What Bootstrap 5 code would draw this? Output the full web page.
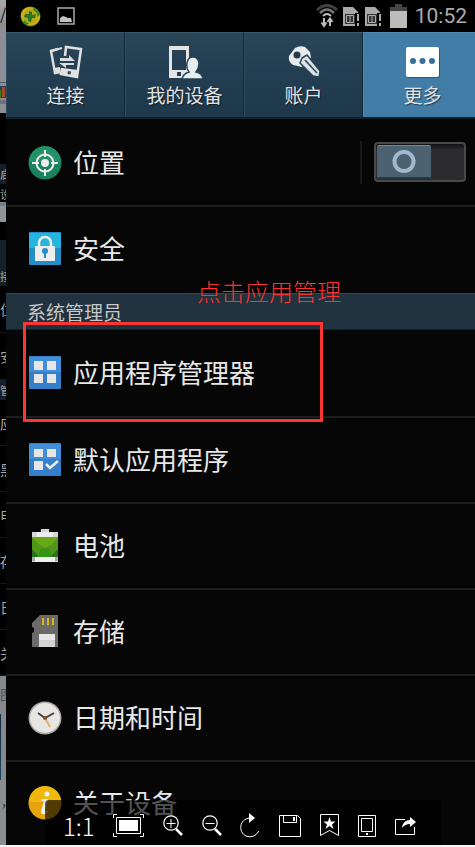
<!DOCTYPE html>
<html lang="zh-CN">
<head>
<meta charset="utf-8">
<meta name="viewport" content="width=device-width, initial-scale=1">
<title>设置</title>
<link href="https://cdn.jsdelivr.net/npm/bootstrap@5.3.0/dist/css/bootstrap.min.css" rel="stylesheet">
<style>
body{background:#f5f5f5;font-family:"Noto Sans CJK SC",sans-serif;color:#e4e4e4}
svg{display:block;flex-shrink:0}
.viewer{background:#080808}
/* sliver of the page behind the viewer */
.backdrop{width:6px;flex:none;background:#000;overflow:hidden;color:#a5a5a5;font-size:14px;line-height:20px;white-space:nowrap}
.backdrop div{height:46px;padding-top:13px;overflow:hidden;border-bottom:1px solid #181818}
.backdrop .b-wide{height:47px}
.backdrop .b-top{height:28px;padding-top:3px;background:linear-gradient(#aaa,#8a8b8e);color:#111;border:0;font-size:16px}
.backdrop .b-gray{height:55px;background:#8c8f95;border-bottom:1px solid #55585c}
.backdrop .b-chart{height:30px;padding-top:3px;background:#8c8f95;border:0}
.backdrop .b-black{height:51px;border:0}
.backdrop .b-navy{height:20px;padding:0;background:#14212c;border:0;font-size:11px}
.backdrop .b-small{height:18px;padding:0;font-size:11px;border:0}
.backdrop .b-light{height:20px;background:#90939a;border:0;border-top:4px solid #71828d}
.backdrop .b-tab{background:#14212c;padding-top:26px;font-size:11px;border:0}
.backdrop .b-foot{height:38px;padding-top:8px;background:#85888d;color:#4b4d50;border:0}
.backdrop .b-pic{height:66px;background:linear-gradient(#152b3e,#144565);border-right:5px solid #85888d;border-bottom:0}
.backdrop .b-end{height:65px;background:#898c91;color:#333;padding:12px 0 0 2px;line-height:16px;border:0}
.phone{min-width:0}
.statusbar{height:32px;background:#000;padding:0 8px 0 14px}
.clock{font:21px/32px Roboto,sans-serif;color:#aaa}
.tabrow{overflow:hidden;background:#1f394d;border-bottom:2px solid #152029}
.tabset{width:calc(100% + 7px)}
.tabset a{height:85px;padding-top:12px;background:linear-gradient(#294558,#1d374b);border-left:1px solid #304b5e;border-right:1px solid #112838;border-top:1px solid #3c5768;color:#e2e2e2;font-size:19px;line-height:28px;text-shadow:1px 1px 1px #0008}
.tabset a.active{background:#427da8;border-color:#5288ae}
.tabset svg{margin-bottom:2px}
.entry{height:86px;padding:0 9px 2px 20px;background:#060606;border-bottom:2px solid #1e1e1e;color:#e8e8e8;font-size:26px;line-height:36px}
.entry svg{margin-top:2px}
.entry:hover{color:#fff}
.entry.tall{height:88px}
.entry.switchable{padding-bottom:0}
.entry.last{border-bottom-color:#060606}
.entry.cut{height:83px}
.section-name{height:37px;background:#20323d;border-top:1px solid #324955;border-bottom:1px solid #142029;padding-left:21px;font-size:19px;line-height:36px;color:#c8c8c8}
.switch-cell{height:43px;border-left:2px solid #181818;padding-left:12px}
.toggle{appearance:none;width:92px;height:40px;border:2px solid #494949;border-radius:4px;background:linear-gradient(#121212,#2c2c2e 6px);padding:1px;margin:0;display:block}
.toggle::before{content:"";display:block;width:54px;height:34px;border-radius:2px;border-top:1px solid #718898;border-bottom:2px solid #263943;background:radial-gradient(circle at center,transparent 7px,#a0b9cf 8px,#a0b9cf 11px,transparent 12px),#4c6271}
.toggle:checked::before{margin-left:32px}
.marker{position:absolute;left:17px;top:-8px;width:300px;height:100px;border:3px solid #f93634;z-index:2;pointer-events:none}
.hint{position:absolute;left:191px;top:-20px;font-size:24px;line-height:36px;font-weight:300;color:#f93330;z-index:2}
.toolset{position:absolute;left:45px;right:34px;bottom:0;height:45px;padding:6px 24px 0 18px;background:#000000a6;border-radius:4px 4px 0 0;z-index:3}
.toolset button{background:none;border:0;padding:0;color:#fff;height:36px;display:flex;align-items:center;justify-content:center}
.toolset .actual-size{font:300 24px/36px "Noto Sans CJK SC",sans-serif}
.footer-gap{height:2px}
</style>
<script src="https://cdn.jsdelivr.net/npm/bootstrap@5.3.0/dist/js/bootstrap.bundle.min.js"></script>
</head>
<body>
<main class="viewer d-flex position-relative">
<div class="backdrop" aria-hidden="true">
<div class="b-top">/:</div><div class="b-gray"></div>
<div class="b-chart"><svg width="6" height="24"><path d="M0 0h6v12H0z" fill="#29435e"/><path d="M0 4h1v7H0z" fill="#3e7c25"/><path d="M2 1h3v10H2z" fill="#a64a27"/><path d="M0 15h6M0 17h6" stroke="#555"/></svg></div>
<div class="b-black"></div><div class="b-navy">启动</div><div class="b-small">设</div><div class="b-light"></div><div class="b-small"></div><div class="b-tab">接</div>
<div class="b-wide">位</div><div class="b-wide">安</div><div class="b-navy">管理</div><div>应用</div><div>黑</div><div>电</div><div>存</div><div>日</div><div>关</div><div class="b-foot">图</div><div class="b-pic"></div><div class="b-end">,</div>
</div>
<div class="phone flex-grow-1 d-flex flex-column">
<header class="statusbar d-flex align-items-center">
<svg width="21" height="21" viewBox="0 0 21 21"><circle cx="10.500" cy="10.500" r="10" fill="#378a24"/><path d="M1 11C0 3 8-1 14 2L10 8 3 16zM20 9c1 7-5 12-13 10L14 13z" fill="#cfae15"/><circle cx="10.500" cy="10.500" r="7" fill="#b9a519"/><path d="M9 5l3 1v3l4-1-1 4h-3l-1 4-3-1v-3l-4-1 1-3h4z" fill="#267724"/></svg>
<svg class="ms-2 ps-1" width="29" height="18" viewBox="-4 0 25 18"><path d="M1 1h16v16H1z" fill="none" stroke="#aaa" stroke-width="1.500"/><path d="M3 15v-4l3-2 3 1 2 1 3 0 1 4z" fill="#c2c2c2"/></svg>
<div class="ms-auto d-flex align-items-center gap-1">
<svg width="22" height="24" viewBox="0 0 22 24" fill="none"><path d="M1 6Q11-3 21 6" stroke="#414141" stroke-width="3"/><path d="M4 9Q11 2 18 9" stroke="#777" stroke-width="2.500"/><path d="M7 12q4-4 8 0" stroke="#bbb" stroke-width="2"/><path d="M8 14v7M5.500 18.500L8 22l2.500-3.500M14 22v-7m-2.500 3L14 14.500l2.500 3.500" stroke="#bbb" stroke-width="2"/></svg>
<svg width="18" height="21" viewBox="0 0 18 21"><path d="M1 1h10l5 5v14H1z" fill="#aaa"/><path d="M3 8h10v10H3z" fill="#333"/><path d="M4.500 9.500h7v7h-7zM8 9v8" fill="none" stroke="#aaa"/><path d="M13 7h5v14h-5z" fill="#000"/><path d="M15 8h2v7h-2zm0 9h2v3h-2z" fill="#aaa"/></svg>
<svg width="18" height="21" viewBox="0 0 18 21"><path d="M1 1h10l5 5v14H1z" fill="#aaa"/><path d="M3 8h10v10H3z" fill="#333"/><path d="M4.500 9.500h7v7h-7zM8 9v8" fill="none" stroke="#aaa"/><path d="M13 7h5v14h-5z" fill="#000"/><path d="M15 8h2v7h-2zm0 9h2v3h-2z" fill="#aaa"/></svg>
<svg class="ms-1" width="17" height="24" viewBox="0 0 17 24"><path d="M5 0h7v3h5v21H0V3h5z" fill="#bcbcbc"/><path d="M5 0h7v3h5v4H0V3h5z" fill="#454545"/></svg>
<span class="clock ms-1">10:52</span>
</div>
</header>
<nav class="tabrow">
<div class="tabset d-flex text-center">
<a href="#" class="col-3 d-flex flex-column align-items-center text-decoration-none"><svg width="34" height="34" viewBox="0 0 34 34" fill="none"><path d="M9 4L2 6l4 22 5-1" stroke="#ddd" stroke-width="2.500"/><path d="M5 23l6-1v6l-5 1z" fill="#ddd"/><path d="M2 6l11-3" stroke="#ddd" stroke-width="2"/><path d="M16 11l1-9 15 2-4 28-16-3 1-6" stroke="#e2e2e2" stroke-width="2.500"/><path d="M13 23l16 2-1 7-16-3z" fill="#e2e2e2"/><path d="M19 26l3 .5-.5 3-3-.5z" fill="#294558"/><path d="M11 13h9v-3l6 6H11zM25 18H10l7 5v-3h8z" fill="#ddd"/></svg>连接</a>
<a href="#" class="col-3 d-flex flex-column align-items-center text-decoration-none"><svg width="36" height="34" viewBox="0 0 36 34"><path d="M2 1h20v32H2zm3 4v20h14V5zm5 22v4h4v-4z" fill="#e4e4e4" fill-rule="evenodd"/><path d="M15 34q1-5 7-7-3-4-2-9 1-6 6-6t6 6q0 5-3 9 6 1 7 7z" fill="#e8eef0" stroke="#294558" stroke-width="1.500"/></svg>我的设备</a>
<a href="#" class="col-3 d-flex flex-column align-items-center text-decoration-none"><svg width="34" height="34" viewBox="0 0 34 34"><path d="M2 11L8 3q5-3 10-1l5 5 1 6-9 9-9-2Q1 17 2 11z" fill="#e6eaeb"/><circle cx="10" cy="10" r="3.500" fill="#24394a"/><path d="M15 13l5-3 13 16-1 6-6-1-13-13z" fill="#dce2e4" stroke="#294558" stroke-width="1.500"/><path d="M18 15l12 13" stroke="#294558" stroke-width="1.500"/></svg>账户</a>
<a href="#" aria-current="page" class="active col-3 d-flex flex-column align-items-center text-decoration-none"><svg width="34" height="34" viewBox="0 0 34 34"><rect x="1" y="3" width="33" height="30" rx="2" fill="#275a7c"/><rect y="2" width="33" height="30" rx="2" fill="#fff"/><g fill="#366f99"><circle cx="7" cy="16" r="3"/><circle cx="16.500" cy="16" r="3"/><circle cx="26" cy="16" r="3"/></g></svg>更多</a>
</div>
</nav>
<div class="entry tall switchable d-flex align-items-center gap-2">
<svg width="39" height="36" viewBox="-2 0 39 36"><circle cx="17" cy="18" r="16.500" fill="#19835f"/><path d="M1 17a16 16 0 0 1 32 0z" fill="#229068"/><g stroke="#eee" fill="none" stroke-width="2"><circle cx="17" cy="18" r="8.500"/><path d="M17 5v7m0 12v7M4 18h7m12 0h7"/></g><circle cx="17" cy="18" r="4" fill="#eee"/></svg>
<label for="location">位置</label><div class="switch-cell ms-auto d-flex align-items-center"><input class="toggle" type="checkbox" role="switch" id="location"></div>
</div>
<a href="#" class="entry last d-flex align-items-center gap-2 text-decoration-none"><svg width="39" height="36" viewBox="-2 0 39 36"><rect x="1" y="1" width="32" height="33" rx="1" fill="#238fc6"/><path d="M1 2h32v15H1z" fill="#25b6df"/><path d="M11 16v-4a6 6 0 0 1 12 0v4" fill="none" stroke="#eee" stroke-width="2.500"/><rect x="7" y="15" width="20" height="15" rx="1" fill="#eee"/><circle cx="17" cy="20" r="3" fill="#238fc6"/><path d="M16 21h2v6h-2z" fill="#238fc6"/></svg>安全</a>
<div class="position-relative"><h2 class="section-name m-0 fw-normal">系统管理员</h2><div class="hint">点击应用管理</div></div>
<div class="position-relative">
<div class="marker"></div>
<a href="#" class="entry tall d-flex align-items-center gap-2 text-decoration-none"><svg width="39" height="36" viewBox="-2 0 39 36"><rect x="1" y="1" width="32" height="33" rx="1" fill="#347fca"/><path d="M1 2h32v15H1z" fill="#438ed8"/><path d="M6 6h9v9H6zm13 0h9v9h-9zM6 19h9v9H6zm13 0h9v9h-9z" fill="#e6e6e6"/></svg>应用程序管理器</a>
<a href="#" class="entry d-flex align-items-center gap-2 text-decoration-none"><svg width="39" height="36" viewBox="-2 0 39 36"><rect x="1" y="1" width="32" height="33" rx="1" fill="#347fca"/><path d="M1 2h32v15H1z" fill="#438ed8"/><path d="M6 7h9v8H6zm13 0h9v8h-9zM6 19h9v9H6z" fill="#e6e6e6"/><path d="M18 22l4 4 8-7" fill="none" stroke="#eee" stroke-width="2.500"/></svg>默认应用程序</a>
<a href="#" class="entry d-flex align-items-center gap-2 text-decoration-none"><svg width="39" height="36" viewBox="-2 0 39 36"><path d="M13 1h8v3h9v30H4V4h9z" fill="#d7d7d7"/><path d="M4 28h26v5H4z" fill="#aaa"/><path d="M7 28h20v6H7zM9 4h16v5H9z" fill="#eee"/><path d="M4 9h26v20H4z" fill="#68a917"/><path d="M4 10l8 7 5 3 6-3 7-7v19H4z" fill="#51961b"/><path d="M4 21l8 8H4zm26 0l-8 8h8z" fill="#287323"/><path d="M12 22q5-4 10 0l2 7H10z" fill="#329516"/></svg>电池</a>
<a href="#" class="entry d-flex align-items-center gap-2 text-decoration-none"><svg width="39" height="36" viewBox="-2 0 39 36"><path d="M12 1h18v32H4V19l2-1v-4l-2-1V9z" fill="#6a6a6a"/><path d="M14 4h2v7h-2zm5 0h2v7h-2zm5 0h2v7h-2z" fill="#dfb421"/><path d="M11 20h16v13H11z" fill="#d2d4d4"/><path d="M11 20h16v6H11z" fill="#e6e6e6"/></svg>存储</a>
<a href="#" class="entry d-flex align-items-center gap-2 text-decoration-none"><svg width="39" height="36" viewBox="-2 0 39 36"><circle cx="17" cy="18" r="16.500" fill="#a8a8a8"/><circle cx="17" cy="18" r="15" fill="#e7e6e2"/><path d="M10 13l7 5 9-5" fill="none" stroke="#454545" stroke-width="2"/><path d="M17 18l5 9" stroke="#edae6d" stroke-width="2"/><circle cx="17" cy="18" r="2" fill="#8a4d27"/></svg>日期和时间</a>
<a href="#" class="entry last cut d-flex align-items-center gap-2 text-decoration-none"><svg width="39" height="36" viewBox="-2 0 39 36"><circle cx="17" cy="18" r="16.500" fill="#e6a30b"/><path d="M1 17a16 16 0 0 1 32 0z" fill="#efb80c"/><circle cx="19" cy="9" r="2.500" fill="#eee"/><path d="M14 14h6l-3 12h3l-2 3q-6 1-5-3l3-10h-3z" fill="#eee"/></svg>关于设备</a>
</div>
</div>
<div class="toolset d-flex justify-content-between align-items-center">
<button type="button" class="actual-size" aria-label="实际大小">1:1</button>
<button type="button" aria-label="适应窗口"><svg width="31" height="23" viewBox="0 0 31 23" fill="none" stroke="#fff"><path d="M.5 4V.5H4M27 .5h3.500V4M.5 19v3.500H4m23 0h3.500V19M3.500 3.500h24v16h-24z"/><path d="M6 6h19v11H6z" fill="#fff" stroke="none"/></svg></button>
<button type="button" aria-label="放大"><svg width="20" height="21" viewBox="0 0 20 21" fill="none" stroke="#fff"><circle cx="8" cy="8" r="7.200" stroke-width="1.200"/><path d="M3.500 8.500h9M8 4v9"/><path d="M13 14l6 6" stroke-width="2.500"/></svg></button>
<button type="button" aria-label="缩小"><svg width="20" height="21" viewBox="0 0 20 21" fill="none" stroke="#fff"><circle cx="8" cy="8" r="7.200" stroke-width="1.200"/><path d="M3.500 8.500h9"/><path d="M13 14l6 6" stroke-width="2.500"/></svg></button>
<button type="button" aria-label="旋转"><svg width="20" height="25" viewBox="0 0 20 25" fill="none" stroke="#fff"><path d="M10 5C-1 6-2 19 6 23q8 3 13-5"/><path d="M9 0l6 5-6 5z" fill="#fff" stroke="none"/></svg></button>
<button type="button" aria-label="保存"><svg width="22" height="22" viewBox="0 0 22 22" fill="none" stroke="#fff"><path d="M.5.500h18l3 3v18H.5zM4.500.500v7h13v-7"/><path d="M14 2h2v4h-2z" fill="#fff" stroke="none"/></svg></button>
<button type="button" aria-label="收藏"><svg width="20" height="23" viewBox="0 0 20 23" fill="none" stroke="#fff"><path d="M.5.500h18v21l-9-5-9 5z"/><path d="M9.500 3l1.500 4.500h4.500l-3.500 3 1.500 4.500-4-3-4 3L7 10.500 3.500 7.500H8z" fill="#fff" stroke="none"/></svg></button>
<button type="button" aria-label="发送到手机"><svg width="18" height="22" viewBox="0 0 18 22" fill="none" stroke="#fff"><path d="M.5.500h17v21H.5zM3.500 3.500h11v13h-11z"/><path d="M8 18h2v2H8z" fill="#fff" stroke="none"/></svg></button>
<button type="button" aria-label="分享"><svg width="22" height="20" viewBox="0 0 22 20" fill="none" stroke="#fff"><path d="M10 3.500H.5v15h19V11"/><path d="M7 12q1-8 8-8V1l6 5-6 5V8q-5 0-8 4z" fill="#fff" stroke="none"/></svg></button>
</div>
</main>
<div class="footer-gap"></div>
</body>
</html>
